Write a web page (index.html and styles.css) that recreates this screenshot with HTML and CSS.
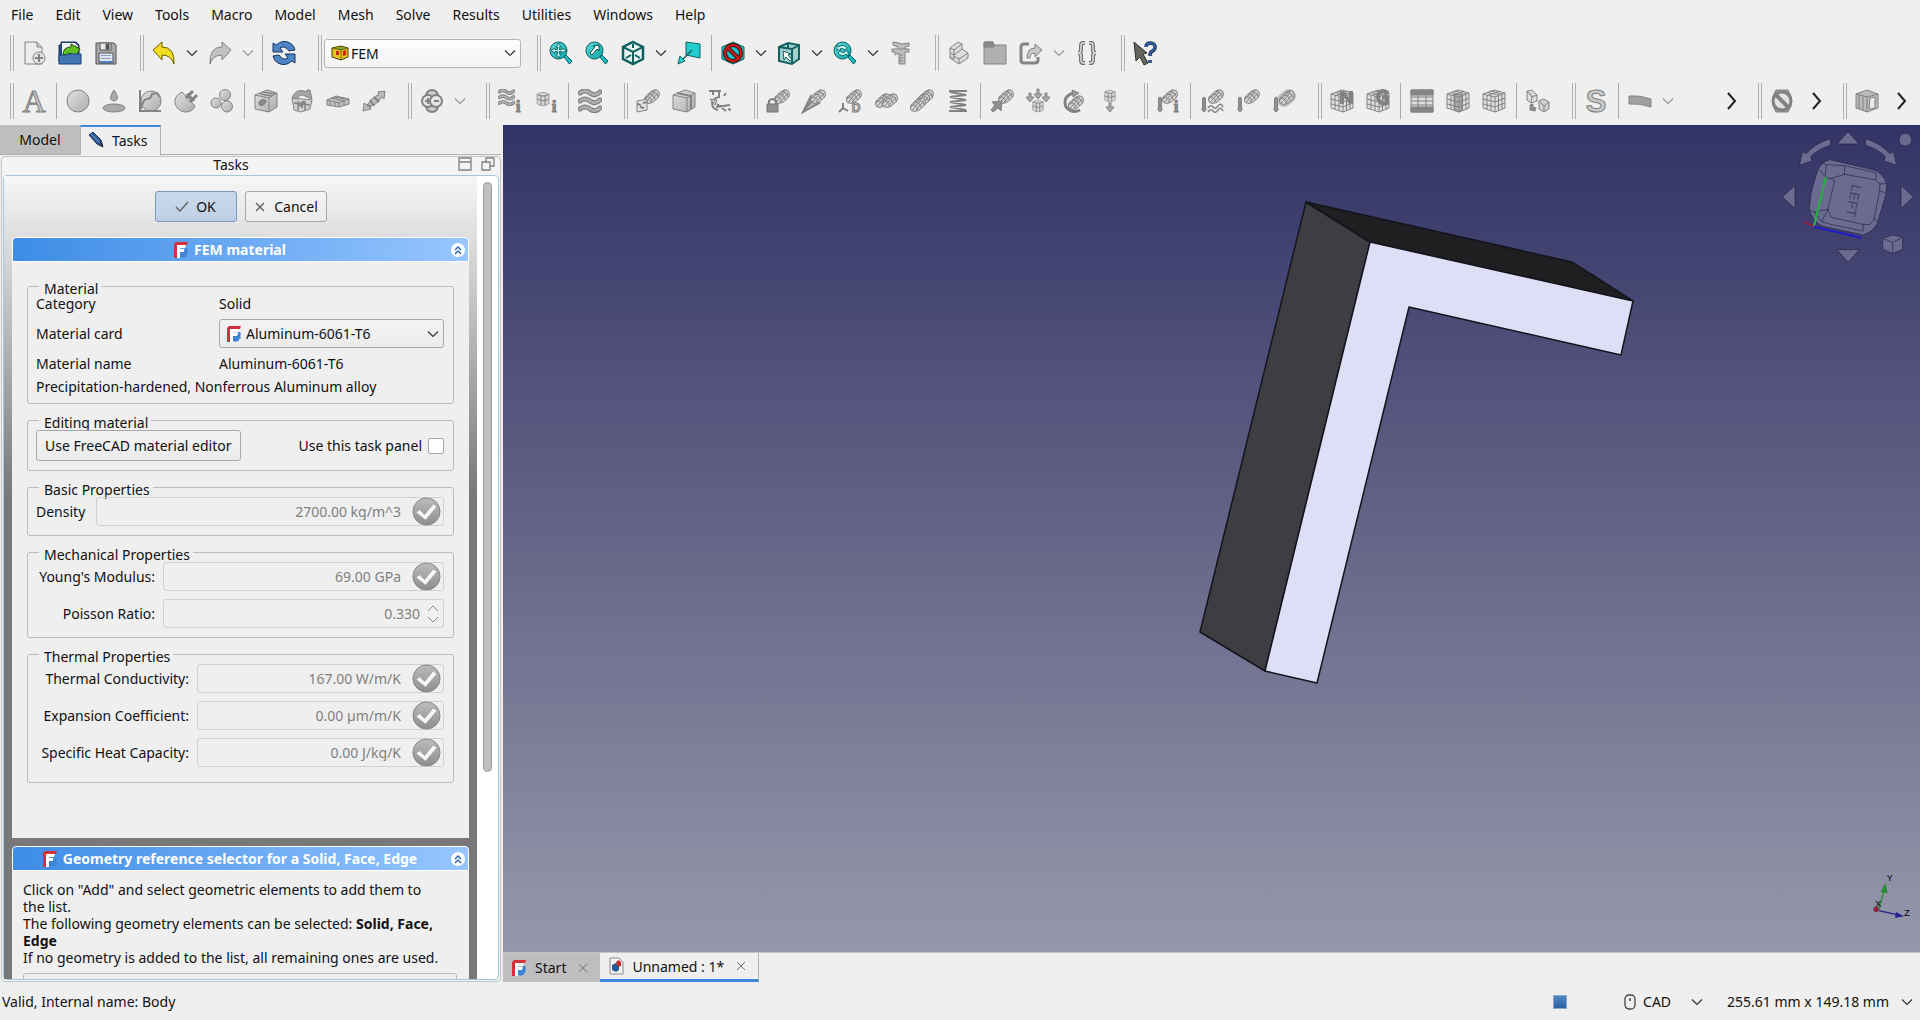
FILE: index.html
```html
<!DOCTYPE html>
<html lang="en">

  <head>
    <meta charset="utf-8">
    <title>FreeCAD</title>
    <link rel="stylesheet" href="styles.css">
  </head>

  <body>

    <!-- shared icon shapes -->
    <svg class="sprite" aria-hidden="true">
      <defs>
        <linearGradient id="teal" x1="0" y1="0" x2="1" y2="1">
          <stop offset="0" stop-color="#5fdcdc"/><stop offset="1" stop-color="#0aa5a8"/>
        </linearGradient>
        <linearGradient id="grey" x1="0" y1="0" x2="1" y2="1">
          <stop offset="0" stop-color="#e2e2e2"/><stop offset="1" stop-color="#acacac"/>
        </linearGradient>
        <linearGradient id="tick" x1="0" y1="0" x2="0" y2="1">
          <stop offset="0" stop-color="#bcbcbc"/><stop offset="1" stop-color="#8e8e8e"/>
        </linearGradient>
      </defs>
      <symbol id="chevron" viewBox="0 0 12 8"><path d="M1 1.5l5 5 5-5" fill="none" stroke="currentColor" stroke-width="1.2"/></symbol>
      <symbol id="more" viewBox="0 0 12 20"><path d="M2 2l7 8-7 8" fill="none" stroke="#222" stroke-width="2"/></symbol>
      <symbol id="logo" viewBox="0 0 16 18">
        <path d="M3 1h12l-1 3H4v13H1V3z" fill="#d3313c"/>
        <path d="M4 4h9l-1 3H7v10H4z" fill="#fff"/>
        <path d="M7 10h5V7h2l1 2-1 2 1 2-2 1 0 2-2 0-1 1-2-1-1 1z" fill="#3d84d6"/>
        <rect x="6" y="8" width="5" height="3" fill="#fff"/>
      </symbol>
      <symbol id="tickball" viewBox="0 0 30 30">
        <circle cx="15" cy="15" r="14" fill="url(#tick)" stroke="#868686"/>
        <path d="M4 16l4-3 5 5 9-11 4 3-12 14z" fill="#f6f6f6" stroke="#8e8e8e" stroke-width=".7"/>
      </symbol>
      <symbol id="lens" viewBox="0 0 24 24">
        <path d="M15 16l2-2 6 6-2.5 3z" fill="#16c0c4" stroke="#0c5557"/>
        <circle cx="9.5" cy="9.5" r="8.5" fill="url(#teal)" stroke="#0c5557"/>
      </symbol>
      <symbol id="rod" viewBox="0 0 24 24">
        <path d="M9 8l6-5.5q4-3 7-1 3 3 .5 7l-6 5q-4 2-7 0-2-2-.5-5.5z" fill="#d2d2d2"/>
        <path d="M9 8q5-1 7.5 5.5M12 5q5-1 7.5 6M15.5 2.5q5 0 7 6M10.5 13l9-10.5M9 10l10-9M14 13l8-9" fill="none"/>
      </symbol>
      <symbol id="can" viewBox="0 0 24 24">
        <path d="M3 5q9-6 18 0v14q-9 6-18 0z" fill="#d6d6d6"/>
        <path d="M3 5q9 5 18 0M3 12q9 5 18 0M9 7v15M15 7v15" fill="none" stroke-width="1.5"/>
      </symbol>
      <symbol id="thermo" viewBox="0 0 24 24"><path d="M2.5 9q1.5-2 3 0v9q2 3-1.5 5-3.5-2-1.5-5z" fill="#8f8f8f"/></symbol>
      <symbol id="grid" viewBox="0 0 24 24">
        <path d="M1 5l11-4 11 3v15l-10 4-12-4z" fill="#dedede"/>
        <path d="M1 5l12 3 10-4M13 8v15M1 10l12 3 10-4M1 15l12 3 10-4M5 6v14M9 7v15M16.5 7v14M20 5v15M5 3.5l12 2.5M9 2l11 3M7 6l11-4" fill="none"/>
      </symbol>
      <symbol id="waves" viewBox="0 0 24 24">
        <path d="M2 4q5-4 10 0t10-1M2 12q5-4 10 0t10-1M2 20q5-4 10 0t10-1" fill="none" stroke="#808080" stroke-width="5" stroke-linecap="round"/>
        <path d="M2 4q5-4 10 0t10-1M2 12q5-4 10 0t10-1M2 20q5-4 10 0t10-1" fill="none" stroke="#b0b0b0" stroke-width="2.5" stroke-linecap="round"/>
      </symbol>
      <symbol id="cube" viewBox="0 0 24 24">
        <path d="M1 6l12-5 10 3v14l-8 5-14-3z" fill="url(#grey)"/>
        <path d="M1 6l14 3 8-5M15 9v14" fill="none"/>
      </symbol>
    </svg>

    <nav class="menubar">
      <a href="#file">File</a>
      <a href="#edit">Edit</a>
      <a href="#view">View</a>
      <a href="#tools">Tools</a>
      <a href="#macro">Macro</a>
      <a href="#model">Model</a>
      <a href="#mesh">Mesh</a>
      <a href="#solve">Solve</a>
      <a href="#results">Results</a>
      <a href="#utilities">Utilities</a>
      <a href="#windows">Windows</a>
      <a href="#help">Help</a>
    </nav>

    <div class="toolbar">
      <span class="handle"></span>
      <button class="tool" aria-label="New"><svg class="icon" viewBox="0 0 24 24"><path d="M3 1h12l5 5v17H3z" fill="#ececec"/><path d="M15 1v5h5" fill="#ccc"/><circle cx="17" cy="17" r="6" fill="#e4e4e4"/><path d="M17 13v8M13 17h8" stroke-width="2"/></svg></button>
      <button class="tool" aria-label="Open"><svg class="icon" viewBox="0 0 24 24"><path d="M1 4h2V1h15l3 3v17H1z" fill="#24487a" stroke="#16305a"/><path d="M4 2h13l3 3v9H4z" fill="#f2f2f2" stroke="none"/><path d="M5 14q0-8 8-8V3l9 5-5 8-3-3q-4-2-6 1z" fill="#5fbf1e" stroke="#1e4f08"/><path d="M1 14h7l3-1h12v10H1z" fill="#3f76b5" stroke="#1b3f70"/></svg></button>
      <button class="tool" aria-label="Save"><svg class="icon dark" viewBox="0 0 24 24"><path d="M2 2h18l2 2v19H2z" fill="#a9a9a9"/><path d="M6 2h11v7H6z" fill="#e9e9e9"/><path d="M12 3h3v5h-3z" fill="#555"/><path d="M5 12h14v10H5z" fill="#dfe6ef"/><path d="M5 20h14v2H5z" fill="#4f7fba" stroke="none"/><path d="M7 14.5h10M7 17.5h10" stroke="#8aa0bc"/></svg></button>
      <span class="handle"></span>
      <button class="tool" aria-label="Undo"><svg class="icon" viewBox="0 0 24 24"><path d="M1 9l9-8v5q13 0 12 17-3-9-12-9v5z" fill="#f2dd22" stroke="#6b5c00"/></svg></button>
      <button class="drop" aria-label="Undo list"><svg class="chev"><use href="#chevron"/></svg></button>
      <button class="tool" aria-label="Redo"><svg class="icon" viewBox="0 0 24 24"><path d="M23 9l-9-8v5Q1 6 2 23q3-9 12-9v5z" fill="#c2c2c2"/></svg></button>
      <button class="drop off" aria-label="Redo list"><svg class="chev"><use href="#chevron"/></svg></button>
      <span class="sep"></span>
      <button class="tool" aria-label="Refresh"><svg class="icon" viewBox="0 0 24 24"><path d="M1 11V2l3 2q7-6 14-2 4 2 5 7l-6 1q-4-6-9-3l3 4z" fill="#4d84c4" stroke="#163560"/><path d="M23 13v9l-3-2q-7 6-14 2-4-2-5-7l6-1q4 6 9 3l-3-4z" fill="#4d84c4" stroke="#163560"/></svg></button>
      <span class="handle"></span>
      <div class="combo workbench">
        <svg class="small" viewBox="0 0 18 16"><path d="M1 3l9-2 7 2v9l-7 3-9-3z" fill="#e3c51c" stroke="#4c3b00"/><path d="M3 3l7-1 5 1-5 2z" fill="#79a527"/><path d="M5 6h3v4H5zM12 6l3-1v5l-3 1z" fill="#cc2318"/><path d="M1 3l9 2 7-2M10 5v10" fill="none" stroke="#4c3b00" stroke-width=".7"/></svg>
        <select aria-label="Workbench"><option>FEM</option></select>
        <svg class="chev"><use href="#chevron"/></svg>
      </div>
      <span class="handle"></span>
      <button class="tool" aria-label="Fit all"><svg class="icon" viewBox="0 0 24 24"><use href="#lens"/><path d="M9.5 2l2.5 4h-1.5v2.5H13V7l4 2.5-4 2.5v-1.5h-2.5V13H12l-2.5 4L7 13h1.5v-2.5H6V12L2 9.5 6 7v1.5h2.5V6H7z" fill="#b5f0f0" stroke="#0c5557" stroke-width=".8"/></svg></button>
      <button class="tool" aria-label="Fit selection"><svg class="icon" viewBox="0 0 24 24"><use href="#lens"/><path d="M14 4v6l-2-2-5 6-2-2 5-6-2-1z" fill="#fff" stroke="#0c4547"/></svg></button>
      <button class="tool" aria-label="Isometric"><svg class="icon teal" viewBox="0 0 24 24"><path d="M12 1l10 5v12l-10 5-10-5V6z" fill="#e6f4f4" stroke-width="2.5"/><path d="M2 6l10 5 10-5M12 11v12M12 3v4M5 17l5-3M19 17l-5-3" fill="none" stroke-width="2"/></svg></button>
      <button class="drop" aria-label="Standard views"><svg class="chev"><use href="#chevron"/></svg></button>
      <button class="tool" aria-label="Align to selection"><svg class="icon teal" viewBox="0 0 24 24"><path d="M9 1l14 2v14L9 14z" fill="#20cfd0"/><path d="M15 9l-9 9" stroke-width="1.5"/><path d="M1 23l2-8 5 5z" fill="#20cfd0"/></svg></button>
      <span class="sep"></span>
      <button class="tool" aria-label="Draw style"><svg class="icon teal" viewBox="0 0 24 24"><path d="M12 1l11 5v12l-11 5-11-5V6z" fill="#13c3c7"/><circle cx="12" cy="12" r="8" fill="none" stroke="#4a0908" stroke-width="4"/><path d="M6 6l12 12" stroke="#4a0908" stroke-width="4"/><circle cx="12" cy="12" r="8" fill="none" stroke="#d01f1f" stroke-width="2"/><path d="M6 6l12 12" stroke="#d01f1f" stroke-width="2"/></svg></button>
      <button class="drop" aria-label="Draw styles"><svg class="chev"><use href="#chevron"/></svg></button>
      <button class="tool" aria-label="Selection view"><svg class="icon teal" viewBox="0 0 24 24"><path d="M2 6l9-4 11 2v14l-7 5-13-3z" fill="#a3d0cf" stroke-width="2"/><path d="M2 6l13 2 7-4M15 8v15M11 2v6" fill="none" stroke-width="2"/><path d="M6 10l8 3-3 1 4 5-2 1-4-4-2 3z" fill="#fff" stroke-width="1"/></svg></button>
      <button class="drop" aria-label="Selection views"><svg class="chev"><use href="#chevron"/></svg></button>
      <button class="tool" aria-label="Zoom"><svg class="icon" viewBox="0 0 24 24"><use href="#lens"/><path d="M4 9V4l2 2q4-4 8 1l-2 2q-3-3-5-1l1 1zM15 10v5l-2-2q-4 4-8-1l2-2q3 3 5 1l-1-1z" fill="#c8f4f4" stroke="#0c5557" stroke-width=".8"/></svg></button>
      <button class="drop" aria-label="Zoom list"><svg class="chev"><use href="#chevron"/></svg></button>
      <button class="tool" aria-label="Measure"><svg class="icon" viewBox="0 0 24 24"><path d="M10 23V12l-4 2v-3H3V8h6V6L4 4V1l6 1 3 1 7-1v3l-4 1v2h4v3h-4v12z" fill="#bdbdbd"/><path d="M10 14h4M10 17h4M10 20h4M10 8h7"/></svg></button>
      <span class="handle"></span>
      <button class="tool" aria-label="Create part"><svg class="icon" viewBox="0 0 24 24"><path d="M3 7l8-6 4 2v5l6 4v5l-9 6-9-6z" fill="#dcdcdc"/><path d="M3 12l4 2 8-6M7 14v4l-4-2M3 7l4 2 8-6M7 9v5M12 23v-5l9-6M12 18l-5-3" fill="none"/></svg></button>
      <button class="tool" aria-label="Create group"><svg class="icon" viewBox="0 0 24 24"><path d="M1 2q0-1 1-1h8l1 3h12v19H1z" fill="#b0b0b0"/><path d="M1 2q0-1 1-1h8l1 3v2H1z" fill="#8a8a8a"/></svg></button>
      <button class="tool" aria-label="Make link"><svg class="icon" viewBox="0 0 24 24"><path d="M10 3H5Q2 3 2 6v13q0 3 3 3h11q3 0 3-3v-3" fill="none" stroke="#858585" stroke-width="3"/><path d="M8 17q0-10 8-10V3l7 6-7 7v-4q-5 0-5 5z" fill="#c6c6c6"/></svg></button>
      <button class="drop off" aria-label="Link list"><svg class="chev"><use href="#chevron"/></svg></button>
      <button class="tool" aria-label="Create variable set"><svg class="icon" viewBox="0 0 24 24"><path d="M10 2H8Q6 2 6 5v4q0 3-3 3 3 0 3 3v4q0 3 2 3h2M14 2h2q2 0 2 3v4q0 3 3 3-3 0-3 3v4q0 3-2 3h-2" fill="none" stroke="#707070" stroke-width="4"/><path d="M10 2H8Q6 2 6 5v4q0 3-3 3 3 0 3 3v4q0 3 2 3h2M14 2h2q2 0 2 3v4q0 3 3 3-3 0-3 3v4q0 3-2 3h-2" fill="none" stroke="#dedede" stroke-width="1.5"/></svg></button>
      <span class="handle"></span>
      <button class="tool" aria-label="What's this"><svg class="icon" viewBox="0 0 24 24"><path d="M1 1l13 11-4 1 5 9-4 2-4-8-4 4z" fill="#62665f" stroke="#2f332d"/><path d="M13 6q0-4 5-4 5 1 4 5-1 3-4 4-1 1-1 4M17 19v3" fill="none" stroke="#16305c" stroke-width="3.5"/><path d="M13 6q0-4 5-4 5 1 4 5-1 3-4 4-1 1-1 4M17 19v3" fill="none" stroke="#3b68ab" stroke-width="1.5"/></svg></button>
    </div>

    <div class="toolbar">
      <span class="handle"></span>
      <button class="tool" aria-label="Analysis"><svg class="icon" viewBox="0 0 24 24"><text class="letter serif" x="12" y="23" font-size="32">A</text></svg></button>
      <span class="sep"></span>
      <button class="tool" aria-label="Solid material"><svg class="icon" viewBox="0 0 24 24"><circle cx="12" cy="12" r="11" fill="url(#grey)"/></svg></button>
      <button class="tool" aria-label="Fluid material"><svg class="icon" viewBox="0 0 24 24"><path d="M12 1q7 10 0 11-7-1 0-11z" fill="#a9a9a9"/><ellipse cx="12" cy="19" rx="11" ry="4" fill="#aaa"/></svg></button>
      <button class="tool" aria-label="Nonlinear material"><svg class="icon" viewBox="0 0 24 24"><circle cx="13" cy="12" r="10" fill="url(#grey)"/><path d="M2 1v21h21M3 20q2-10 6-10 4 0 5-5l5-1 3 4" fill="none" stroke-width="2"/></svg></button>
      <button class="tool" aria-label="Reinforced material"><svg class="icon" viewBox="0 0 24 24"><path d="M8 3q-8 4-7 11 2 8 10 9 8 0 10-6z" fill="url(#grey)"/><path d="M12 9l7-7M16 13l7-7M13 5l7 7" stroke-width="3"/></svg></button>
      <button class="tool" aria-label="Material editor"><svg class="icon" viewBox="0 0 24 24"><circle cx="15" cy="6" r="5.5" fill="url(#grey)"/><circle cx="6" cy="14" r="5" fill="url(#grey)"/><circle cx="17" cy="17.5" r="5.5" fill="url(#grey)"/></svg></button>
      <span class="sep"></span>
      <button class="tool" aria-label="Beam section"><svg class="icon" viewBox="0 0 24 24"><use href="#cube"/><path d="M6 5l12 2M9 3l12 2M5 14q3-5 7-2-2 5-6 4z" fill="#8d8d8d" stroke-width="1.5"/></svg></button>
      <button class="tool" aria-label="Beam rotation"><svg class="icon" viewBox="0 0 24 24"><path d="M2 9l20 2-2 9-9 3-7-2z" fill="#cfcfcf"/><path d="M8 12v9M15 12v9M4 14l16 2" fill="none" stroke-width="1.5"/><path d="M8 15l6-3-2 7z" fill="#8b8b8b"/><path d="M2 9q4-11 15-6V1h3l2 9-5-2q-7-5-10 2z" fill="#a5a5a5"/></svg></button>
      <button class="tool" aria-label="Shell thickness"><svg class="icon" viewBox="0 0 24 24"><path d="M1 11l9-4 13 3v5l-10 3-12-2z" fill="#c0c0c0"/><path d="M1 11l12 3 10-4M13 14v4M5 9l13 3M4 12v4M9 13v4M18 12v4M8 8l11 2" fill="none"/></svg></button>
      <button class="tool" aria-label="Fluid section"><svg class="icon" viewBox="0 0 24 24"><path d="M1 22l1-8 3 2 5-6q4-4 7-4l-1-3 7-1-1 8-2-2-4 5q-3 3-6 3l-2 2 1 2z" fill="#bcbcbc"/><path d="M8 11l4 6M12 8l5 5M5 16l4 2" fill="none" stroke-width="2"/></svg></button>
      <span class="handle"></span>
      <button class="tool" aria-label="Electromagnetic boundary"><svg class="icon" viewBox="0 0 24 24"><circle cx="12" cy="7" r="6" fill="#ccc" stroke-width="2"/><circle cx="12" cy="17" r="6" fill="#ccc" stroke-width="2"/><circle cx="8" cy="12" r="6" fill="#e6e6e6" stroke-width="2"/><circle cx="16" cy="12" r="6" fill="#e6e6e6" stroke-width="2"/><path d="M5 12h6M8 9v6M14 12h5" stroke-width="2"/></svg></button>
      <button class="drop off" aria-label="Electromagnetic list"><svg class="chev"><use href="#chevron"/></svg></button>
      <span class="handle"></span>
      <button class="tool" aria-label="Initial flow velocity"><svg class="icon" viewBox="0 0 24 24"><use href="#waves" width="17" height="17"/><text class="letter slab" x="20" y="23" font-size="17">i</text></svg></button>
      <button class="tool" aria-label="Initial pressure"><svg class="icon" viewBox="0 0 24 24"><use href="#can" x="1" y="2" width="16" height="16"/><text class="letter slab" x="20" y="23" font-size="17">i</text></svg></button>
      <span class="sep"></span>
      <button class="tool" aria-label="Flow velocity"><svg class="icon" viewBox="0 0 24 24"><use href="#waves"/></svg></button>
      <span class="handle"></span>
      <button class="tool" aria-label="Plane rotation"><svg class="icon" viewBox="0 0 24 24"><use href="#rod"/><path d="M1 12l10-2v11l-10 2z" fill="#e2e2e2"/><path d="M1 15l4 1M7 14l4-1M4 18l4 1" stroke-width="2"/></svg></button>
      <button class="tool" aria-label="Section print"><svg class="icon" viewBox="0 0 24 24"><use href="#cube"/><path d="M5 4l14 3v13" fill="none" stroke-width="2"/></svg></button>
      <button class="tool" aria-label="Transform"><svg class="icon" viewBox="0 0 24 24"><path d="M1 2h12M11 1v7M5 2v4M12 8q-6 0-8 6 0 6 6 7M8 18l14-2M9 15l9 7M16 7l2-3M20 20l3 1" fill="none" stroke-width="2"/><path d="M2 10l5 6 2-5z" fill="#bbb"/></svg></button>
      <span class="handle"></span>
      <button class="tool" aria-label="Fixed boundary"><svg class="icon" viewBox="0 0 24 24"><use href="#rod"/><path d="M1 15h11v8H1z" fill="#8f8f8f" stroke="#777"/><path d="M3 15v-3q3.5-4 7 0v3" fill="none" stroke-width="2"/></svg></button>
      <button class="tool" aria-label="Rigid body"><svg class="icon" viewBox="0 0 24 24"><path d="M9 7L1 23l16-9z" fill="#bdbdbd" stroke-width="2"/><use href="#rod"/><path d="M2 21l8-9" fill="none" stroke-width="2"/></svg></button>
      <button class="tool" aria-label="Displacement boundary"><svg class="icon" viewBox="0 0 24 24"><use href="#rod"/><path d="M5 14v5l-4 4M5 19l5 3" fill="none" stroke-width="2"/><text class="letter" x="18" y="23" font-size="12">D</text></svg></button>
      <button class="tool" aria-label="Contact"><svg class="icon" viewBox="0 0 24 24"><use href="#rod" x="-7" y="4"/><use href="#rod" x="0" y="4"/></svg></button>
      <button class="tool" aria-label="Tie"><svg class="icon" viewBox="0 0 24 24"><use href="#rod"/><use href="#rod" x="-4" y="4"/><use href="#rod" x="-8" y="8"/></svg></button>
      <button class="tool" aria-label="Spring"><svg class="icon" viewBox="0 0 24 24"><path d="M3 2h18M3 22h18M4 3l16 3-16 2 16 3-16 2 16 3-16 2 16 3" fill="none" stroke-width="2"/></svg></button>
      <span class="sep"></span>
      <button class="tool" aria-label="Force load"><svg class="icon" viewBox="0 0 24 24"><use href="#rod"/><path d="M12 12l-1 10-3-3-5 4-2-2 4-5-3-3z" fill="#8f8f8f"/></svg></button>
      <button class="tool" aria-label="Pressure load"><svg class="icon" viewBox="0 0 24 24"><use href="#can" x="5" y="10" width="14" height="14"/><path d="M11 0h2v5h3l-4 5-4-5h3zM3 4h2v4h3l-4 5-4-5h3zM19 4h2v4h3l-4 5-4-5h3z" fill="#a8a8a8"/></svg></button>
      <button class="tool" aria-label="Centrifugal load"><svg class="icon" viewBox="0 0 24 24"><use href="#rod" x="-2" y="6"/><path d="M18 21q-8 4-14-3-4-11 8-14" fill="none" stroke-width="3"/><path d="M10 1l7 3-6 4z" fill="#999"/></svg></button>
      <button class="tool" aria-label="Self weight"><svg class="icon" viewBox="0 0 24 24"><use href="#can" x="5" y="0" width="14" height="14"/><path d="M11 14h2v4h3l-4 5-4-5h3z" fill="#aaa"/></svg></button>
      <span class="handle"></span>
      <button class="tool" aria-label="Initial temperature"><svg class="icon" viewBox="0 0 24 24"><use href="#rod" x="-2"/><use href="#thermo"/><text class="letter slab" x="20" y="23" font-size="17">i</text></svg></button>
      <span class="sep"></span>
      <button class="tool" aria-label="Heat flux"><svg class="icon" viewBox="0 0 24 24"><use href="#rod"/><use href="#thermo"/><path d="M8 19q3-4 5-1t5-1 5 1M8 23q3-4 5-1t5-1 5 1" fill="none" stroke-width="1.5"/></svg></button>
      <button class="tool" aria-label="Temperature"><svg class="icon" viewBox="0 0 24 24"><use href="#rod"/><use href="#thermo"/></svg></button>
      <button class="tool" aria-label="Body heat source"><svg class="icon" viewBox="0 0 24 24"><path d="M12 11l5-4" stroke="#bcbcbc" stroke-width="14" stroke-linecap="round"/><use href="#rod" x="-1" y="1"/><use href="#thermo"/></svg></button>
      <span class="handle"></span>
      <button class="tool" aria-label="Netgen mesh"><svg class="icon" viewBox="0 0 24 24"><use href="#grid"/><path d="M12 15V3M12 3l9 11M21 14V2" fill="none" stroke-width="4"/></svg></button>
      <button class="tool" aria-label="Gmsh mesh"><svg class="icon" viewBox="0 0 24 24"><use href="#grid"/><path d="M22 4q-8-5-10 3 0 9 9 7V8h-4" fill="none" stroke-width="4"/></svg></button>
      <span class="sep"></span>
      <button class="tool" aria-label="Boundary layer"><svg class="icon" viewBox="0 0 24 24"><path d="M1 1h22v22H1z" fill="#ddd"/><path d="M1 1h22v5H1zM1 18h22v5H1z" fill="#858585"/><path d="M1 8h22M1 12h22M1 16h22M8 6v12M16 6v12"/></svg></button>
      <button class="tool" aria-label="Mesh region"><svg class="icon" viewBox="0 0 24 24"><use href="#grid"/><path d="M8 6l8-1v16l-3 2-5-2z" fill="#888" fill-opacity=".6"/></svg></button>
      <button class="tool" aria-label="Mesh group"><svg class="icon" viewBox="0 0 24 24"><use href="#grid"/></svg></button>
      <span class="sep"></span>
      <button class="tool" aria-label="Mesh to body"><svg class="icon" viewBox="0 0 24 24"><path d="M1 2l5-1 5 5v6l-6 2-4-3z" fill="#dcdcdc"/><path d="M1 2l5 6 5-2M6 8l-1 6M13 12l5-2 5 3v7l-5 3-5-3z" fill="#cfcfcf"/><path d="M13 12l5 5 5-4M18 17v6" fill="none"/><path d="M4 16l3-1v3l3 1-1 3-5-1z" fill="#8d8d8d"/></svg></button>
      <span class="handle"></span>
      <button class="tool" aria-label="Solver"><svg class="icon" viewBox="0 0 24 24"><text class="letter" x="12" y="23" font-size="31">S</text></svg></button>
      <span class="sep"></span>
      <button class="tool" aria-label="Equations"><svg class="icon" viewBox="0 0 24 24"><path d="M1 7q11-1 22 3v8q-11-4-22-3z" fill="#a0a0a0"/></svg></button>
      <button class="drop off" aria-label="Equation list"><svg class="chev"><use href="#chevron"/></svg></button>
      <button class="ext first" aria-label="More solver tools"><svg class="more"><use href="#more"/></svg></button>
      <span class="handle"></span>
      <button class="tool" aria-label="Clipping plane"><svg class="icon" viewBox="0 0 24 24"><path d="M6 1h12l3 6v10l-3 6H6l-3-6V7z" fill="#999"/><circle cx="12" cy="12" r="9" fill="#e2e2e2" stroke-width="3"/><path d="M6 6l12 12" stroke-width="4"/></svg></button>
      <button class="ext" aria-label="More utilities"><svg class="more"><use href="#more"/></svg></button>
      <span class="handle"></span>
      <button class="tool" aria-label="Pipeline"><svg class="icon" viewBox="0 0 24 24"><path d="M1 5l11-4 11 4v14l-11 4-11-4z" fill="#b9b9b9"/><path d="M1 5l11 3 11-3M12 8v15M4 6v14M8 7v14" fill="none"/><path d="M15 9l5-1v11l-6 1z" fill="#eaeaea"/></svg></button>
      <button class="ext" aria-label="More results"><svg class="more"><use href="#more"/></svg></button>
    </div>

    <main class="workspace">

      <aside class="side">
        <div class="tabs">
          <button class="tab">Model</button>
          <button class="tab active"><svg class="pencil" viewBox="0 0 16 16"><path d="M1 3l4-3 8 8 2 7-6-3z" fill="#2f5c92" stroke="#1a2d4a"/><path d="M3 2l8 8" stroke="#6f9ccc"/><path d="M12 12l3 3-1-4z" fill="#222"/></svg>Tasks</button>
        </div>
        <div class="dock">
          <div class="dock-title">
            <span>Tasks</span>
            <button aria-label="Dock"><svg viewBox="0 0 14 14"><path d="M1 1h12v12H1zM1 5h12" fill="none" stroke="#808080" stroke-width="1.3"/></svg></button>
            <button aria-label="Float"><svg viewBox="0 0 14 14"><path d="M1 5h8v8H1zM5 5V1h8v8H9" fill="none" stroke="#808080" stroke-width="1.3"/></svg></button>
          </div>
          <div class="scroller">
            <div class="panel">
              <div class="actions">
                <button class="push default"><svg viewBox="0 0 14 14"><path d="M1 7l4 4 8-9" fill="none" stroke="#666" stroke-width="1.5"/></svg>OK</button>
                <button class="push"><svg viewBox="0 0 14 14"><path d="M3 3l8 8M11 3l-8 8" stroke="#666" stroke-width="1.5"/></svg>Cancel</button>
              </div>

              <section class="box">
                <h2><svg class="logo"><use href="#logo"/></svg><span>FEM material</span>
                  <button class="fold" aria-label="Collapse"><svg viewBox="0 0 14 14"><path d="M4 7l3-3 3 3M4 11l3-3 3 3" fill="none" stroke="#2a62a8" stroke-width="1.4"/></svg></button></h2>
                <div class="box-body">
                  <fieldset>
                    <legend>Material</legend>
                    <div class="form material">
                      <span>Category</span><span>Solid</span>
                      <label for="card">Material card</label>
                      <div class="combo card">
                        <svg class="logo"><use href="#logo"/></svg>
                        <select id="card"><option>Aluminum-6061-T6</option></select>
                        <svg class="chev"><use href="#chevron"/></svg>
                      </div>
                      <span>Material name</span><span>Aluminum-6061-T6</span>
                      <span class="wide">Precipitation-hardened, Nonferrous Aluminum alloy</span>
                    </div>
                  </fieldset>

                  <fieldset>
                    <legend>Editing material</legend>
                    <div class="editing">
                      <button class="push">Use FreeCAD material editor</button>
                      <label for="panel-edit">Use this task panel</label>
                      <input type="checkbox" id="panel-edit">
                    </div>
                  </fieldset>

                  <fieldset>
                    <legend>Basic Properties</legend>
                    <div class="form basic">
                      <label for="density">Density</label>
                      <div class="field"><input id="density" value="2700.00 kg/m^3" disabled><svg class="ball"><use href="#tickball"/></svg></div>
                    </div>
                  </fieldset>

                  <fieldset>
                    <legend>Mechanical Properties</legend>
                    <div class="form mechanical">
                      <label for="young">Young's Modulus:</label>
                      <div class="field"><input id="young" value="69.00 GPa" disabled><svg class="ball"><use href="#tickball"/></svg></div>
                      <label for="poisson">Poisson Ratio:</label>
                      <div class="field"><input id="poisson" value="0.330" disabled><svg class="spin" viewBox="0 0 12 18"><path d="M1 6l5-5 5 5M1 12l5 5 5-5" fill="none" stroke="#8a8a8a"/></svg></div>
                    </div>
                  </fieldset>

                  <fieldset class="last">
                    <legend>Thermal Properties</legend>
                    <div class="form thermal">
                      <label for="conductivity">Thermal Conductivity:</label>
                      <div class="field"><input id="conductivity" value="167.00 W/m/K" disabled><svg class="ball"><use href="#tickball"/></svg></div>
                      <label for="expansion">Expansion Coefficient:</label>
                      <div class="field"><input id="expansion" value="0.00 µm/m/K" disabled><svg class="ball"><use href="#tickball"/></svg></div>
                      <label for="heat">Specific Heat Capacity:</label>
                      <div class="field"><input id="heat" value="0.00 J/kg/K" disabled><svg class="ball"><use href="#tickball"/></svg></div>
                    </div>
                  </fieldset>
                </div>
              </section>

              <section class="box">
                <h2><svg class="logo"><use href="#logo"/></svg><span>Geometry reference selector for a Solid, Face, Edge</span>
                  <button class="fold" aria-label="Collapse"><svg viewBox="0 0 14 14"><path d="M4 7l3-3 3 3M4 11l3-3 3 3" fill="none" stroke="#2a62a8" stroke-width="1.4"/></svg></button></h2>
                <div class="selector">
                  <p>Click on "Add" and select geometric elements to add them to<br>the list.<br>
                    The following geometry elements can be selected: <b>Solid, Face,<br>Edge</b><br>
                    If no geometry is added to the list, all remaining ones are used.</p>
                  <div class="list"></div>
                </div>
              </section>
            </div>
            <div class="scrollbar"><div class="thumb"></div></div>
          </div>
        </div>
      </aside>

      <div class="documents">
        <div class="view">
          <svg class="scene" viewBox="0 0 1417 827" preserveAspectRatio="xMidYMid meet">
            <g stroke="#14141c" stroke-width="1.5" stroke-linejoin="round">
              <path d="M803 77L867 117L762 546L697 507z" fill="#3e3d41"/>
              <path d="M803 77L1069 137L1130 176L867 117z" fill="#1f1f21"/>
              <path d="M867 117L1130 176L1118 230L906 182L814 558L762 546z" fill="#dfdef7"/>
            </g>
          </svg>

          <svg class="navcube" viewBox="120 15 420 435">
            <g fill="#6b6b92" stroke="#23233f" stroke-width="2">
              <path d="M324 35l33 37h-66zM291 389h67l-34 38zM127 231l38-35v69zM520 231l-37-35v69z"/>
              <circle cx="496" cy="59" r="19"/>
              <path d="M270 56l2 20q-36 10-60 34l4 13-38 13 10-42 10 7q28-31 72-45zM378 56l-2 20q36 10 60 34l-4 13 38 13-10-42-10 7q-28-31-72-45z"/>
              <path d="M428 355l30-10 30 7v36l-30 13-30-13z"/>
              <path d="M428 355l30 12 30-15M458 367v34" fill="none"/>
              <path d="M270 119L400 149Q428 158 440 190L438 222L412 310Q400 335 370 345L245 318Q215 300 208 268L213 220L233 150Q245 125 270 119z"/>
              <path d="M314 137L408 158L408 180L313 163zM314 163L270 176L284 182L264 268L245 305L275 314L370 333L368 313L274 292L264 268M408 182L420 192L419 212L402 297L390 314L368 313M240 125L258 134L314 137M258 134L256 170L270 176M420 192L440 190M419 212L437 220M402 297L414 308M210 270L222 276L264 268M222 276L245 305M236 148L256 170" fill="none"/>
            </g>
            <text class="facetext" transform="translate(335 192) rotate(100)">LEFT</text>
            <path d="M190 305l32 14" stroke="#8c1f3f" stroke-width="6"/>
            <path d="M222 318L258 170" stroke="#23b43c" stroke-width="6"/>
            <path d="M222 320l142 33" stroke="#1c1cc4" stroke-width="6"/>
          </svg>

          <svg class="axes" viewBox="1050 30 150 150">
            <path d="M1076 150l17-60" stroke="#2a8c34" stroke-width="4"/>
            <path d="M1096 70l7 30-22-4z" fill="#2a8c34"/>
            <path d="M1076 152l55 12" stroke="#24248c" stroke-width="4"/>
            <path d="M1152 169l-24-13-3 18z" fill="#24248c"/>
            <circle cx="1068" cy="148" r="8" fill="#8c2438"/>
            <text x="1100" y="64">Y</text>
            <text x="1066" y="140">X</text>
            <text x="1153" y="168">Z</text>
          </svg>
        </div>
        <div class="doc-tabs">
          <button class="doc-tab"><svg class="logo"><use href="#logo"/></svg>Start<svg class="close" viewBox="0 0 10 10"><path d="M1 1l8 8M9 1l-8 8" stroke="#777"/></svg></button>
          <button class="doc-tab active"><svg class="logo" viewBox="0 0 16 18"><path d="M2 1h9l4 4v12H2z" fill="#f4f4f4" stroke="#888"/><path d="M4 8l4-2 3 2v5l-3 2-4-2z" fill="#27599a"/><path d="M8 5l3-2 2 2v4l-3 1z" fill="#c9262c"/></svg>Unnamed : 1*<svg class="close" viewBox="0 0 10 10"><path d="M1 1l8 8M9 1l-8 8" stroke="#777"/></svg></button>
        </div>
      </div>

    </main>

    <footer class="statusbar">
      <span class="message">Valid, Internal name: Body</span>
      <span class="swatch"></span>
      <button class="nav-style"><svg viewBox="0 0 12 16"><rect x="1" y="1" width="10" height="14" rx="4" fill="none" stroke="#444" stroke-width="1.3"/><path d="M6 4v3" stroke="#444" stroke-width="1.5"/></svg><span>CAD</span><svg class="chev"><use href="#chevron"/></svg></button>
      <button class="size">255.61 mm x 149.18 mm<svg class="chev"><use href="#chevron"/></svg></button>
    </footer>

  </body>

</html>
```
FILE: styles.css
```css
:root {
  --background-color: #efefef;
  --text-color: #111;
  --line-color: #bcbcbc;
  --accent-color: #3f87d9;
  --tab-color: #bebebe;
}

* {
  box-sizing: border-box;
}

body {
  display: flex;
  flex-direction: column;
  height: 100vh;
  margin: 0;
  overflow: hidden;
  background: var(--background-color);
  color: var(--text-color);
  font-family: "Noto Sans", "Open Sans", sans-serif;
  font-size: 14px;
  line-height: 17px;
}

button, input, select {
  margin: 0;
  padding: 0;
  border: 0;
  background: none;
  color: inherit;
  font: inherit;
}

button svg {
  flex: none;
}

.sprite {
  position: absolute;
  width: 0;
  height: 0;
}

/* menu and toolbars */

.menubar {
  display: flex;
  flex: none;
  align-items: center;
  gap: 22px;
  height: 29px;
  padding: 0 11px;
}

.menubar a {
  color: inherit;
  text-decoration: none;
}

.toolbar {
  display: flex;
  flex: none;
  align-items: center;
  height: 48px;
  padding: 0 8px 0 10px;
}

.handle {
  flex: none;
  width: 4px;
  height: 36px;
  margin: 0 2px 0 16px;
  border: solid #b0b0b0;
  border-width: 0 1px;
}

.handle:first-child {
  margin-left: 0;
}

.sep {
  flex: none;
  width: 1px;
  height: 36px;
  margin: 0 3px 0 4px;
  background: #a8a8a8;
}

.tool, .drop, .ext {
  display: flex;
  flex: none;
  align-items: center;
  justify-content: center;
  width: 36px;
  height: 36px;
}

.drop, .ext {
  width: 20px;
}

.ext {
  margin-left: 7px;
}

.ext.first {
  margin-left: auto;
}

.more {
  width: 12px;
  height: 20px;
}

.icon {
  width: 24px;
  height: 24px;
  overflow: visible;
  stroke: #828282;
}

.icon.dark {
  stroke: #555;
}

.icon.teal {
  stroke: #12615f;
}

.letter {
  fill: #c9c9c9;
  stroke: #808080;
  font-family: "Liberation Sans", sans-serif;
  font-weight: bold;
  text-anchor: middle;
}

.letter.serif {
  font-family: "Liberation Serif", serif;
  font-weight: normal;
}

.letter.slab {
  fill: #8a8a8a;
  font-family: "Liberation Serif", serif;
}

.chev {
  flex: none;
  width: 12px;
  height: 8px;
  color: #333;
}

.off .chev {
  color: #999;
}

.combo {
  display: flex;
  align-items: center;
  height: 29px;
  padding: 0 4px;
  border: 1px solid #b4b4b4;
  border-radius: 3px;
  background: linear-gradient(#fdfdfd, #f4f4f4);
}

.combo select {
  flex: 1;
  height: 26px;
  min-width: 0;
  appearance: none;
}

.workbench {
  width: 197px;
}

.small {
  width: 18px;
  height: 16px;
  margin: 0 2px;
}

.logo {
  flex: none;
  width: 16px;
  height: 18px;
}

/* left dock */

.workspace {
  display: flex;
  flex: 1;
  min-height: 0;
}

.side {
  display: flex;
  flex: none;
  flex-direction: column;
  width: 503px;
  padding-right: 2px;
}

.tabs {
  display: flex;
  flex: none;
  height: 30px;
  border-bottom: 1px solid #b2b2b2;
}

.tab {
  display: flex;
  align-items: center;
  justify-content: center;
  width: 80px;
  height: 29px;
  background: var(--tab-color);
}

.tab.active {
  justify-content: flex-start;
  gap: 8px;
  width: 81px;
  height: 30px;
  padding: 0 0 2px 7px;
  border: 1px solid #b2b2b2;
  border-top: 2px solid var(--accent-color);
  border-bottom: 0;
  background: var(--background-color);
}

.pencil {
  width: 16px;
  height: 16px;
}

.dock {
  display: flex;
  flex: 1;
  flex-direction: column;
  min-height: 0;
  margin: 1px 0 0 1px;
  padding: 0 1px 1px;
  border: 1px solid #c4c4c4;
  border-radius: 4px;
  background: #f4f4f4;
}

.dock-title {
  display: flex;
  flex: none;
  align-items: center;
  gap: 9px;
  height: 18px;
  padding: 0 4px 4px 0;
}

.dock-title span {
  flex: 1;
  padding-left: 10px;
  text-align: center;
}

.dock-title button {
  width: 14px;
  height: 14px;
}

.dock-title svg {
  display: block;
}

.scroller {
  display: flex;
  flex: 1;
  min-height: 0;
  border: 1px solid #9fc9d6;
  border-radius: 4px;
  background: #fff;
}

.panel {
  flex: 1;
  min-width: 0;
  padding: 0 8px;
  overflow: hidden;
  background: linear-gradient(#f6f6f6, #787878 320px);
}

.scrollbar {
  flex: none;
  width: 21px;
  padding: 6px;
}

.thumb {
  width: 9px;
  height: 590px;
  border: 1px solid #999;
  border-radius: 5px;
  background: #c0c0c0;
}

.actions {
  display: flex;
  justify-content: center;
  gap: 8px;
  padding: 15px 0;
}

.push {
  display: flex;
  align-items: center;
  justify-content: center;
  gap: 7px;
  height: 31px;
  padding: 0 8px;
  border: 1px solid #a8a8a8;
  border-radius: 3px;
  background: linear-gradient(#f3f3f3, #ebebeb);
}

.push svg {
  width: 14px;
  height: 14px;
}

.actions .push {
  width: 82px;
}

.push.default {
  border-color: #7d98b8;
  background: linear-gradient(#c9d9ec, #bfd0e6);
}

.box {
  margin-bottom: 8px;
}

.box h2 {
  display: flex;
  align-items: center;
  justify-content: center;
  gap: 5px;
  height: 25px;
  margin: 0;
  padding: 0 3px 0 0;
  border: 1px solid #fff;
  border-radius: 4px 4px 0 0;
  background: linear-gradient(90deg, #3d8ce6, #97c6ff);
  color: #fff;
  font-size: 14px;
}

.box h2 .logo {
  margin-left: auto;
}

.fold {
  display: block;
  width: 14px;
  height: 14px;
  margin-left: auto;
  border-radius: 7px;
  background: #fff;
}

.fold svg {
  display: block;
}

.box-body {
  padding: 14px 15px 55px;
  background: var(--background-color);
}

fieldset {
  min-width: 0;
  margin: 0 0 6px;
  padding: 0 9px 9px 8px;
  border: 1px solid var(--line-color);
  border-radius: 3px;
}

fieldset.last {
  margin-bottom: 0;
  padding-bottom: 15px;
}

legend {
  height: 20px;
  margin-left: 3px;
  padding: 5px 3px 0 5px;
  line-height: 15px;
}

.form {
  display: grid;
  align-items: center;
  gap: 8px;
}

.form > span, .form > label {
  line-height: 15px;
  white-space: nowrap;
}

.material {
  grid-template-columns: 175px 1fr;
}

.material .wide {
  grid-column: 1 / 3;
}

.card {
  border-color: #a8a8a8;
  background: linear-gradient(#f3f3f3, #ebebeb);
}

.card .logo {
  margin-left: 2px;
}

.card select {
  padding-left: 4px;
}

.editing {
  display: flex;
  align-items: center;
}

.editing label {
  margin-left: auto;
}

.editing input {
  width: 16px;
  height: 16px;
  margin-left: 6px;
  border: 1px solid #a8a8a8;
  border-radius: 2px;
  background: #fff;
  appearance: none;
}

.basic {
  grid-template-columns: 52px 1fr;
}

.mechanical {
  grid-template-columns: 119px 1fr;
  text-align: right;
}

.thermal {
  grid-template-columns: 153px 1fr;
  text-align: right;
}

.field {
  display: flex;
  align-items: center;
  height: 29px;
  padding-right: 2px;
  border: 1px solid #d0d0d0;
  border-radius: 3px;
}

.field input {
  flex: 1;
  min-width: 0;
  color: #808080;
  text-align: right;
}

.ball {
  flex: none;
  width: 29px;
  height: 29px;
  margin-left: 11px;
}

.spin {
  flex: none;
  width: 12px;
  height: 18px;
  margin: 0 2px 0 7px;
}

.selector {
  padding: 10px 12px 0 11px;
  background: var(--background-color);
  white-space: nowrap;
}

.selector p {
  margin: 0 0 7px;
}

.list {
  height: 120px;
  border: 1px solid var(--line-color);
  border-radius: 3px;
}

/* 3D view */

.documents {
  display: flex;
  flex: 1;
  flex-direction: column;
  min-width: 0;
}

.view {
  position: relative;
  flex: 1;
  min-height: 0;
  border-bottom: 1px solid #c4c4c4;
  background: linear-gradient(#333366, #9797ab);
}

.scene {
  display: block;
  width: 100%;
  height: 100%;
}

.navcube {
  position: absolute;
  top: 0;
  right: 0;
  width: 140px;
  height: 145px;
}

.facetext {
  fill: #3f3f62;
  font-family: "Liberation Sans", sans-serif;
  font-size: 40px;
}

.axes {
  position: absolute;
  right: 0;
  bottom: 32px;
  width: 50px;
  height: 50px;
  font-family: "Liberation Sans", sans-serif;
  font-size: 27px;
}

.doc-tabs {
  display: flex;
  flex: none;
  height: 29px;
}

.doc-tab {
  display: flex;
  align-items: center;
  gap: 8px;
  padding: 0 12px 0 8px;
  background: var(--tab-color);
}

.doc-tab.active {
  border-right: 1px solid #b2b2b2;
  border-bottom: 3px solid var(--accent-color);
  background: var(--background-color);
}

.close {
  width: 10px;
  height: 10px;
  margin-left: 4px;
}

/* status bar */

.statusbar {
  display: flex;
  flex: none;
  align-items: center;
  height: 38px;
  padding: 1px 7px 0 2px;
}

.message {
  flex: 1;
}

.swatch {
  width: 14px;
  height: 14px;
  border: 1px solid #88a9cf;
  background: linear-gradient(#4e88c6, #2d62a3);
}

.nav-style, .size {
  display: flex;
  align-items: center;
}

.nav-style {
  gap: 7px;
  margin: 0 24px 0 57px;
}

.nav-style svg:first-child {
  width: 12px;
  height: 16px;
}

.nav-style .chev {
  margin-left: 13px;
}

.size {
  gap: 12px;
}
```
